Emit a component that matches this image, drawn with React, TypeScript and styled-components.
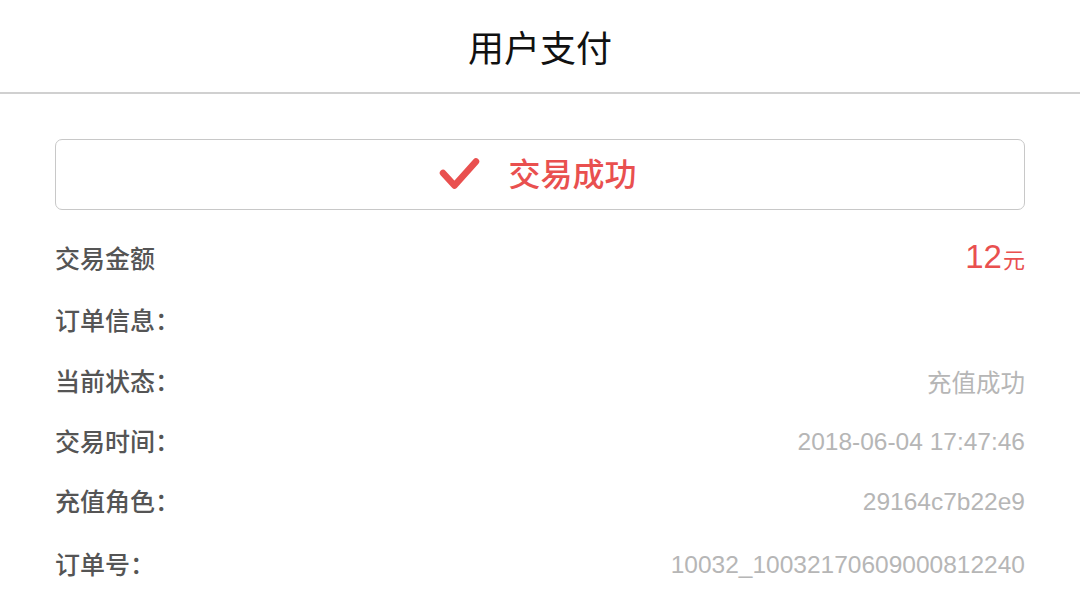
import * as React from "react";
import styled, { createGlobalStyle } from "styled-components";

const GlobalStyle = createGlobalStyle`
    html, body {
        margin: 0;
        padding: 0;
        background: #ffffff;
    }
    body {
        font-family: "Liberation Sans", "Noto Sans CJK SC", sans-serif;
    }
`;

const Page = styled.div`
    width: 1080px;
    height: 608px;
    overflow: hidden;
    background: #ffffff;
`;

const Header = styled.div`
    height: 92px;
    display: flex;
    align-items: center;
    justify-content: center;
    border-bottom: 2px solid #d0d0d0;
    box-sizing: content-box;
`;

const Title = styled.div`
    font-family: "Noto Sans CJK SC", sans-serif;
    font-size: 36px;
    color: #111111;
`;

const Content = styled.div`
    padding: 45px 55px 0 55px;
`;

const StatusBox = styled.div`
    height: 69px;
    border: 1.5px solid #c8c8c8;
    border-radius: 7px;
    display: flex;
    align-items: center;
    justify-content: center;
    gap: 27px;
    padding-right: 4px;
`;

const StatusText = styled.div`
    font-family: "Noto Sans CJK SC", sans-serif;
    font-size: 32px;
    font-weight: 500;
    color: #e9504f;
    padding-bottom: 5px;
`;

const Rows = styled.div`
    margin-top: 16px;
    display: flex;
    flex-direction: column;
`;

const Row = styled.div<{ $height: number }>`
    height: ${p => p.$height}px;
    display: flex;
    align-items: center;
    justify-content: space-between;
`;

const Label = styled.div`
    font-family: "Noto Sans CJK SC", sans-serif;
    font-size: 25px;
    font-weight: 500;
    color: #555555;
`;

const Value = styled.div`
    font-family: "Liberation Sans", "Noto Sans CJK SC", sans-serif;
    font-size: 24.5px;
    color: #b6b6b6;
    padding-top: 3px;
`;

const Amount = styled.div`
    font-family: "Liberation Sans", sans-serif;
    font-size: 33px;
    color: #e9504f;
    display: flex;
    align-items: baseline;
`;

const Unit = styled.span`
    font-family: "Noto Sans CJK SC", sans-serif;
    font-size: 22px;
    margin-left: 1px;
`;

const CheckIcon = () => (
    <svg width="42" height="34" viewBox="0 0 42 34">
        <path
            d="M4 15 L15.5 27.5 L37 3.5"
            fill="none"
            stroke="#e9504f"
            strokeWidth="6.5"
            strokeLinecap="round"
            strokeLinejoin="round"
        />
    </svg>
);

const details = [
    { label: "订单信息：", value: "", height: 62 },
    { label: "当前状态：", value: "充值成功", height: 60 },
    { label: "交易时间：", value: "2018-06-04 17:47:46", height: 60 },
    { label: "充值角色：", value: "29164c7b22e9", height: 60 },
    { label: "订单号：", value: "10032_10032170609000812240", height: 66 },
];

export default function App() {
    return (
        <Page>
            <GlobalStyle />
            <Header>
                <Title>用户支付</Title>
            </Header>
            <Content>
                <StatusBox>
                    <CheckIcon />
                    <StatusText>交易成功</StatusText>
                </StatusBox>
                <Rows>
                    <Row $height={62}>
                        <Label>交易金额</Label>
                        <Amount>
                            12<Unit>元</Unit>
                        </Amount>
                    </Row>
                    {details.map(d => (
                        <Row key={d.label} $height={d.height}>
                            <Label>{d.label}</Label>
                            <Value>{d.value}</Value>
                        </Row>
                    ))}
                </Rows>
            </Content>
        </Page>
    );
}
